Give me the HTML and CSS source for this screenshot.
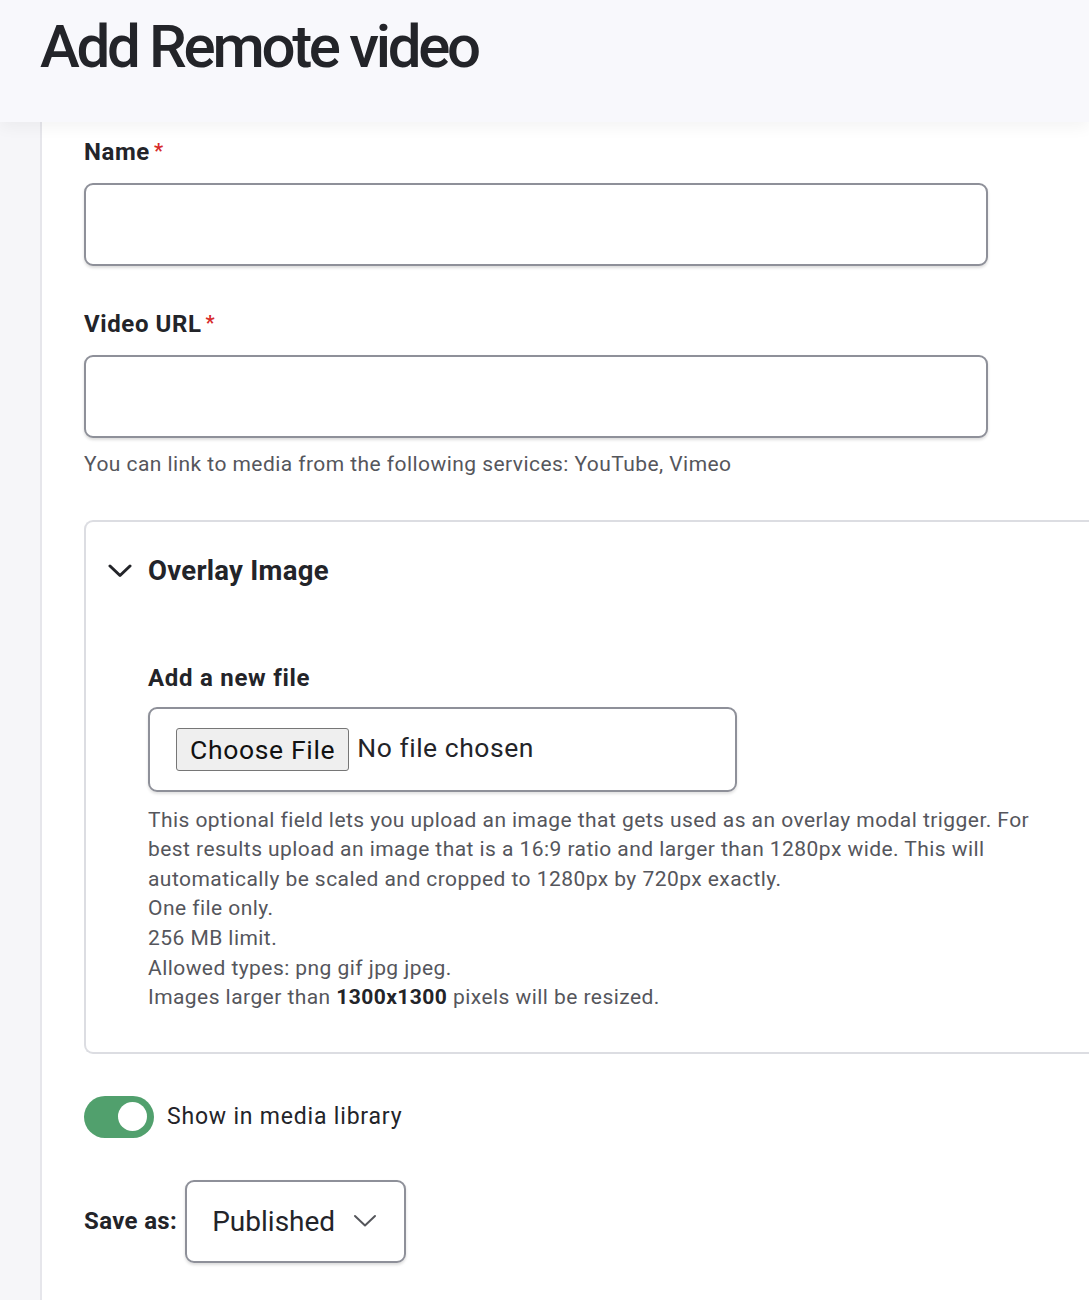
FILE: index.html
```html
<!DOCTYPE html>
<html lang="en">
<head>
<meta charset="utf-8">
<title>Add Remote video</title>
<link rel="stylesheet" href="styles.css">
</head>
<body>
<header class="page-header">
  <h1 class="page-title">Add Remote video</h1>
</header>
<div class="layout">
  <div class="side-strip"></div>
  <main class="content">
    <form class="media-form">
      <div class="form-item">
        <label class="form-label">Name<span class="req">*</span></label>
        <input class="form-text" type="text">
      </div>
      <div class="form-item">
        <label class="form-label">Video URL<span class="req">*</span></label>
        <input class="form-text" type="text">
        <div class="description">You can link to media from the following services: YouTube, Vimeo</div>
      </div>
      <details class="details" open>
        <summary class="details-summary">
          <svg class="chev" width="24" height="14" viewBox="0 0 24 14"><path d="M2 2 L12 11.5 L22 2" fill="none" stroke="#232429" stroke-width="3" stroke-linecap="round" stroke-linejoin="round"/></svg>
          <span>Overlay Image</span>
        </summary>
        <div class="details-body">
          <div class="file-label">Add a new file</div>
          <div class="file-box">
            <span class="file-btn">Choose File</span>
            <span class="file-status">No file chosen</span>
          </div>
          <div class="description file-desc">
            This optional field lets you upload an image that gets used as an overlay modal trigger. For best results upload an image that is a 16:9 ratio and larger than 1280px wide. This will automatically be scaled and cropped to 1280px by 720px exactly.<br>
            One file only.<br>
            256 MB limit.<br>
            Allowed types: png gif jpg jpeg.<br>
            Images larger than <strong>1300x1300</strong> pixels will be resized.
          </div>
        </div>
      </details>
      <div class="toggle-row">
        <span class="toggle"><span class="knob"></span></span>
        <span class="toggle-label">Show in media library</span>
      </div>
      <div class="save-row">
        <span class="save-label">Save as:</span>
        <span class="select">
          <span>Published</span>
          <svg width="24" height="14" viewBox="0 0 24 14"><path d="M2 2 L12 11.5 L22 2" fill="none" stroke="#55565b" stroke-width="2" stroke-linecap="round" stroke-linejoin="round"/></svg>
        </span>
      </div>
    </form>
  </main>
</div>
</body>
</html>
```

FILE: styles.css
```css
html, body {
  margin: 0;
  padding: 0;
  overflow-x: hidden;
}
body {
  font-family: Roboto, "Liberation Sans", Arial, sans-serif;
  color: #232429;
  background: #fff;
}
.page-header {
  position: relative;
  z-index: 1;
  height: 122px;
  background: #f8f8fc;
  box-shadow: 0 6px 14px rgba(0, 0, 0, 0.045);
  display: flex;
  align-items: flex-start;
}
.page-title {
  margin: 0;
  padding: 12px 0 0 40px;
  font-size: 60px;
  font-weight: 500;
  letter-spacing: -0.055em;
  line-height: 70px;
  color: #232429;
}
.layout {
  display: flex;
  min-height: 1178px;
}
.side-strip {
  width: 40px;
  flex: none;
  background: #f6f6f9;
  border-right: 2px solid #e6e6eb;
}
.content {
  flex: 1;
  background: #fff;
  padding-left: 42px;
  padding-top: 13px;
}
.media-form {
  display: flex;
  flex-direction: column;
}
.form-item {
  display: flex;
  flex-direction: column;
  margin-bottom: 41px;
}
.form-label {
  font-size: 24px;
  font-weight: 700;
  line-height: 32px;
  margin-bottom: 15px;
  letter-spacing: 0.025em;
}
.req {
  color: #d72b2b;
  margin-left: 4px;
  font-size: 20px;
  vertical-align: 2px;
}
.form-text {
  width: 904px;
  height: 83px;
  box-sizing: border-box;
  border: 2px solid #8e9099;
  border-radius: 9px;
  background: #fff;
  box-shadow: 0 2px 3px rgba(0, 0, 0, 0.14);
  margin: 0;
  font: inherit;
}
.description {
  font-size: 21px;
  line-height: 29.6px;
  color: #55565c;
  margin-top: 12px;
  letter-spacing: 0.021em;
}
.form-item:nth-child(2) {
  margin-bottom: 40px;
}
.details {
  border: 2px solid #dcdde2;
  border-right: 0;
  border-radius: 9px 0 0 9px;
  margin-bottom: 42px;
}
.details-summary {
  list-style: none;
  display: flex;
  align-items: center;
  gap: 16px;
  padding: 30px 0 0 22px;
  height: 38px;
  font-size: 27.5px;
  font-weight: 700;
  letter-spacing: 0.01em;
}
.details-summary::-webkit-details-marker {
  display: none;
}
.chev {
  flex: none;
}
.details-body {
  padding: 72px 50px 39px 62px;
}
.file-label {
  font-size: 24px;
  font-weight: 700;
  line-height: 32px;
  margin-bottom: 13px;
  letter-spacing: 0.03em;
}
.file-box {
  width: 589px;
  height: 85px;
  box-sizing: border-box;
  border: 2px solid #8e9099;
  border-radius: 9px;
  box-shadow: 0 2px 3px rgba(0, 0, 0, 0.12);
  display: flex;
  align-items: center;
  padding-left: 26px;
  gap: 8px;
}
.file-btn {
  box-sizing: border-box;
  height: 43px;
  padding: 0 13px;
  display: flex;
  align-items: center;
  background: #efefef;
  border: 1px solid #767676;
  border-radius: 3px;
  font-size: 26.5px;
  letter-spacing: 0.025em;
  color: #111;
  margin-top: 1px;
}
.file-status {
  font-size: 26.5px;
  letter-spacing: 0.02em;
  color: #232429;
  margin-top: -4px;
}
.file-desc {
  margin-top: 14px;
}
.file-desc strong {
  color: #232429;
  font-weight: 700;
}
.toggle-row {
  display: flex;
  align-items: center;
  gap: 13px;
}
.toggle {
  width: 70px;
  height: 42px;
  border-radius: 21px;
  background: #51a06d;
  display: flex;
  align-items: center;
  justify-content: flex-end;
  padding-right: 7px;
  box-sizing: border-box;
}
.knob {
  width: 29px;
  height: 29px;
  border-radius: 50%;
  background: #fff;
}
.toggle-label {
  font-size: 23px;
  letter-spacing: 0.035em;
  color: #232429;
}
.save-row {
  display: flex;
  align-items: center;
  gap: 8px;
  margin-top: 42px;
}
.save-label {
  font-size: 24px;
  font-weight: 700;
  letter-spacing: 0.015em;
}
.select {
  box-sizing: border-box;
  width: 221px;
  height: 83px;
  border: 2px solid #8e9099;
  border-radius: 9px;
  box-shadow: 0 2px 3px rgba(0, 0, 0, 0.14);
  display: flex;
  align-items: center;
  justify-content: space-between;
  padding: 0 27px 0 25px;
  font-size: 28px;
  color: #232429;
}
```
